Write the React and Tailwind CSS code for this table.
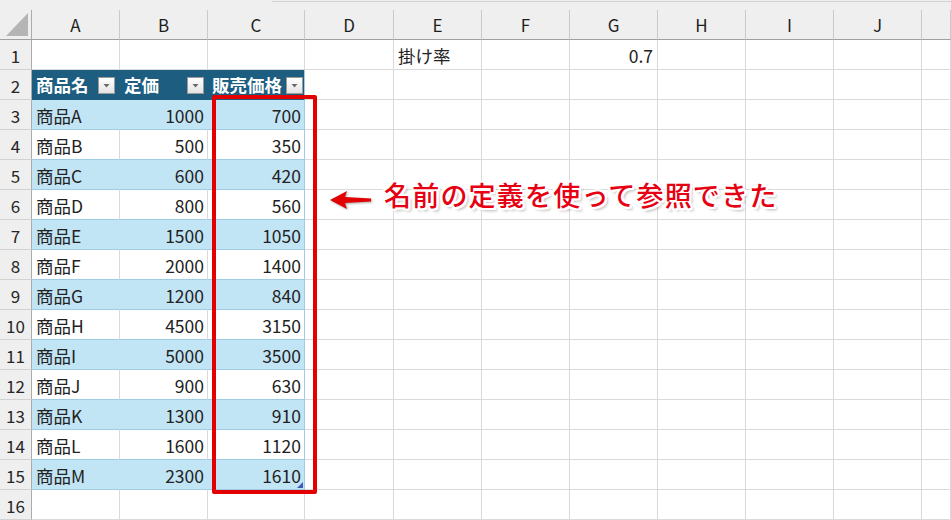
import React from "react";

const cols = [
  { l: "A", w: "w-[88px]" },
  { l: "B", w: "w-[88px]" },
  { l: "C", w: "w-[97px]" },
  { l: "D", w: "w-[89px]" },
  { l: "E", w: "w-[88px]" },
  { l: "F", w: "w-[88px]" },
  { l: "G", w: "w-[88px]" },
  { l: "H", w: "w-[88px]" },
  { l: "I", w: "w-[88px]" },
  { l: "J", w: "w-[88px]" },
  { l: "", w: "w-[29px]" },
];

const data = [
  ["商品A", 1000, 700],
  ["商品B", 500, 350],
  ["商品C", 600, 420],
  ["商品D", 800, 560],
  ["商品E", 1500, 1050],
  ["商品F", 2000, 1400],
  ["商品G", 1200, 840],
  ["商品H", 4500, 3150],
  ["商品I", 5000, 3500],
  ["商品J", 900, 630],
  ["商品K", 1300, 910],
  ["商品L", 1600, 1120],
  ["商品M", 2300, 1610],
];

const font = "font-['Noto_Sans_CJK_JP','Noto_Sans',sans-serif]";

function RowHead({ n }) {
  return (
    <div className="w-[32px] h-full shrink-0 bg-[#efefef] border-r border-b border-r-[#ababab] border-b-[#d2d2d2] flex items-center justify-center text-[17px] text-[#262626] pt-[2px]">
      {n}
    </div>
  );
}

function GridCell({ w, children, className = "" }) {
  return (
    <div
      className={`${w} h-full shrink-0 border-r border-b border-[#dadada] flex items-center px-[4px] pt-[3px] text-[17.5px] text-[#222] ${className}`}
    >
      {children}
    </div>
  );
}

function FilterBtn({ mr }) {
  return (
    <div
      className={`w-[17px] h-[17px] shrink-0 ${mr} mb-[5px] self-end border border-[#9a9a9a] bg-gradient-to-b from-[#ffffff] to-[#e4e4e4] flex items-center justify-center pt-[1px]`}
    >
      <svg width="7" height="4" viewBox="0 0 7 4">
        <polygon points="0.5,0 6.5,0 3.5,3.5" fill="#6a6a6a" />
      </svg>
    </div>
  );
}

export default function App() {
  return (
    <div className={`relative w-[951px] h-[520px] overflow-hidden bg-white ${font}`}>
      {/* top strip */}
      <div className="h-[10px] flex bg-[#efefef]">
        <div className="w-[272px]" />
        <div className="flex-1 mt-[1px] border-t border-[#d2d2d2]" />
      </div>

      {/* column headers */}
      <div className="h-[30px] flex">
        <div className="w-[32px] shrink-0 bg-[#efefef] border-r border-b border-r-[#ababab] border-b-[#a0a0a0] flex items-end justify-end pr-[3px] pb-[3px]">
          <svg width="22" height="23" viewBox="0 0 22 23">
            <polygon points="22,0 22,23 0,23" fill="#b5b5b5" />
          </svg>
        </div>
        {cols.map((c, i) => (
          <div
            key={i}
            className={`${c.w} shrink-0 bg-[#efefef] border-r border-b border-r-[#cacaca] border-b-[#a0a0a0] flex items-center justify-center text-[17px] text-[#1e1e1e]`}
          >
            {c.l}
          </div>
        ))}
      </div>

      {/* row 1 */}
      <div className="h-[30px] flex">
        <RowHead n={1} />
        {cols.map((c, i) => (
          <GridCell key={i} w={c.w} className={i === 6 ? "justify-end" : ""}>
            {i === 4 ? "掛け率" : i === 6 ? "0.7" : ""}
          </GridCell>
        ))}
      </div>

      {/* row 2 - table header */}
      <div className="h-[30px] flex">
        <RowHead n={2} />
        <div className="w-[88px] h-full shrink-0 bg-[#1d5d80] border-b border-[#1d5d80] flex items-stretch pl-[4px] text-white font-bold text-[17.5px]">
          <span className="flex-1 flex items-center pt-[2px]">商品名</span>
          <FilterBtn mr="mr-[5px]" />
        </div>
        <div className="w-[88px] h-full shrink-0 bg-[#1d5d80] border-b border-[#1d5d80] flex items-stretch pl-[4px] text-white font-bold text-[17.5px]">
          <span className="flex-1 flex items-center pt-[2px]">定価</span>
          <FilterBtn mr="mr-[4px]" />
        </div>
        <div className="w-[97px] h-full shrink-0 bg-[#1d5d80] border-b border-r border-b-[#1d5d80] border-r-[#9fcbe6] flex items-stretch pl-[4px] text-white font-bold text-[17.5px]">
          <span className="flex-1 flex items-center pt-[2px] whitespace-nowrap">販売価格</span>
          <FilterBtn mr="mr-[1px]" />
        </div>
        {cols.slice(3).map((c, i) => (
          <GridCell key={i} w={c.w} />
        ))}
      </div>

      {/* data rows */}
      {data.map((d, idx) => {
        const blue = idx % 2 === 0;
        const bg = blue ? "bg-[#c2e5f6]" : "bg-white";
        const inner = blue ? "border-r-transparent" : "border-r-[#dadada]";
        const last = idx === data.length - 1;
        return (
          <div key={idx} className="h-[30px] flex">
            <RowHead n={idx + 3} />
            <div
              className={`w-[88px] h-full shrink-0 ${bg} border-r border-b ${inner} border-b-[#9fcbe6] flex items-center px-[4px] pt-[3px] text-[17.5px] text-[#222]`}
            >
              {d[0]}
            </div>
            <div
              className={`w-[88px] h-full shrink-0 ${bg} border-r border-b ${inner} border-b-[#9fcbe6] flex items-center justify-end pr-[3px] pt-[3px] text-[17.5px] text-[#222]`}
            >
              {d[1]}
            </div>
            <div
              className={`relative w-[97px] h-full shrink-0 ${bg} border-r border-b border-r-[#9fcbe6] border-b-[#9fcbe6] flex items-center justify-end pr-[3px] pt-[3px] text-[17.5px] text-[#222]`}
            >
              {d[2]}
              {last && (
                <svg
                  className="absolute right-[1px] bottom-[1px]"
                  width="6"
                  height="6"
                  viewBox="0 0 6 6"
                >
                  <polygon points="6,0 6,6 0,6" fill="#4358b8" />
                </svg>
              )}
            </div>
            {cols.slice(3).map((c, i) => (
              <GridCell key={i} w={c.w} />
            ))}
          </div>
        );
      })}

      {/* row 16 */}
      <div className="h-[30px] flex">
        <RowHead n={16} />
        {cols.map((c, i) => (
          <GridCell key={i} w={c.w} />
        ))}
      </div>

      {/* red highlight box */}
      <div className="absolute left-[212px] top-[95px] w-[105px] h-[399px] border-4 border-[#e30000] rounded-[2px]" />

      {/* arrow */}
      <svg
        className="absolute left-[328px] top-[188px] [filter:drop-shadow(1px_1px_1px_rgba(0,0,0,0.35))]"
        width="46"
        height="26"
        viewBox="0 0 46 26"
      >
        <polygon
          points="2,12 19,3 17,9 43,10.5 43,13.5 17,15 19,21"
          fill="#e30000"
        />
      </svg>

      {/* annotation */}
      <div className="absolute left-[384px] top-[181px] text-[27px] leading-[28px] tracking-[1.2px] font-medium text-[#e60012] whitespace-nowrap [text-shadow:-2px_0_0_#fff,2px_0_0_#fff,0_-2px_0_#fff,0_2px_0_#fff,-2px_-2px_0_#fff,2px_-2px_0_#fff,-2px_2px_0_#fff,2px_2px_0_#fff,3px_3px_3px_rgba(0,0,0,0.3)]">
        名前の定義を使って参照できた
      </div>
    </div>
  );
}
